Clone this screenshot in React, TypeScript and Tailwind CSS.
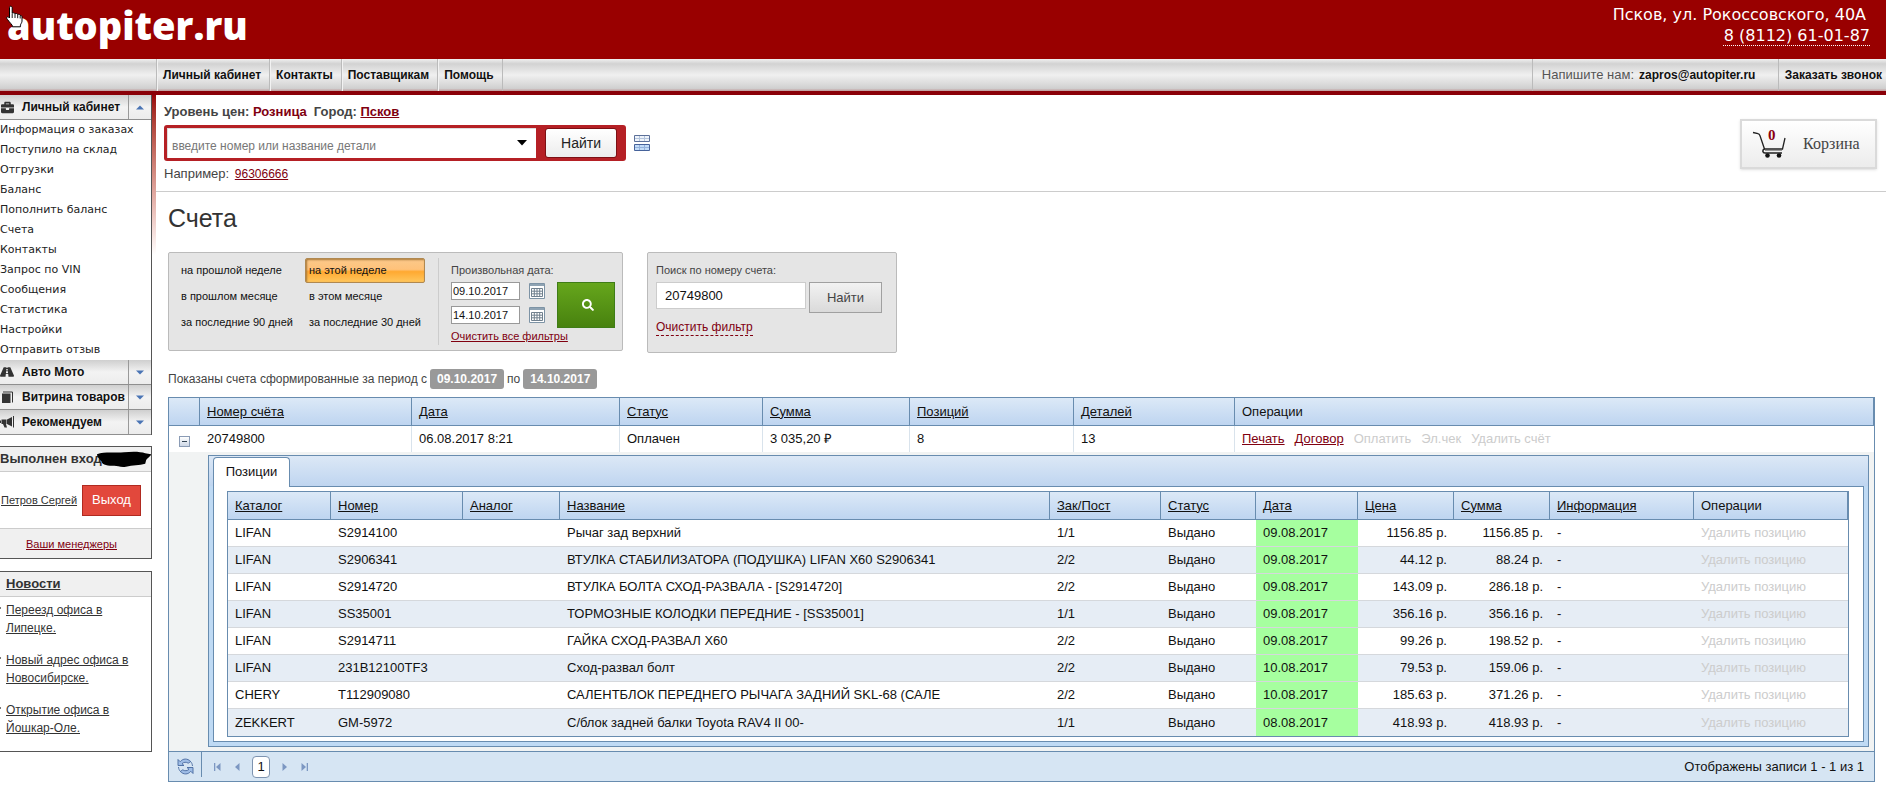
import { FaBriefcase, FaRoad, FaSearch } from "react-icons/fa";

const menuItems = [
  "Информация о заказах",
  "Поступило на склад",
  "Отгрузки",
  "Баланс",
  "Пополнить баланс",
  "Счета",
  "Контакты",
  "Запрос по VIN",
  "Сообщения",
  "Статистика",
  "Настройки",
  "Отправить отзыв",
];

const news = [
  "Переезд офиса в Липецке.",
  "Новый адрес офиса в Новосибирске.",
  "Открытие офиса в Йошкар-Оле.",
];

const navLinks = ["Личный кабинет", "Контакты", "Поставщикам", "Помощь"];

const periods = [
  "на прошлой неделе",
  "на этой неделе",
  "в прошлом месяце",
  "в этом месяце",
  "за последние 90 дней",
  "за последние 30 дней",
];

const positions = [
  { catalog: "LIFAN", number: "S2914100", name: "Рычаг зад верхний", qty: "1/1", date: "09.08.2017", price: "1156.85 р.", sum: "1156.85 р." },
  { catalog: "LIFAN", number: "S2906341", name: "ВТУЛКА СТАБИЛИЗАТОРА (ПОДУШКА) LIFAN X60 S2906341", qty: "2/2", date: "09.08.2017", price: "44.12 р.", sum: "88.24 р." },
  { catalog: "LIFAN", number: "S2914720", name: "ВТУЛКА БОЛТА СХОД-РАЗВАЛА - [S2914720]", qty: "2/2", date: "09.08.2017", price: "143.09 р.", sum: "286.18 р." },
  { catalog: "LIFAN", number: "SS35001", name: "ТОРМОЗНЫЕ КОЛОДКИ ПЕРЕДНИЕ - [SS35001]", qty: "1/1", date: "09.08.2017", price: "356.16 р.", sum: "356.16 р." },
  { catalog: "LIFAN", number: "S2914711", name: "ГАЙКА СХОД-РАЗВАЛ X60", qty: "2/2", date: "09.08.2017", price: "99.26 р.", sum: "198.52 р." },
  { catalog: "LIFAN", number: "231B12100TF3", name: "Сход-развал болт", qty: "2/2", date: "10.08.2017", price: "79.53 р.", sum: "159.06 р." },
  { catalog: "CHERY", number: "T112909080", name: "САЛЕНТБЛОК ПЕРЕДНЕГО РЫЧАГА ЗАДНИЙ SKL-68 (САЛЕ", qty: "2/2", date: "10.08.2017", price: "185.63 р.", sum: "371.26 р." },
  { catalog: "ZEKKERT", number: "GM-5972", name: "С/блок задней балки Toyota RAV4 II 00-", qty: "1/1", date: "08.08.2017", price: "418.93 р.", sum: "418.93 р." },
];

const invoiceColumns = [
  { title: "Номер счёта", width: "w-[212px]" },
  { title: "Дата", width: "w-[208px]" },
  { title: "Статус", width: "w-[143px]" },
  { title: "Сумма", width: "w-[147px]" },
  { title: "Позиций", width: "w-[164px]" },
  { title: "Деталей", width: "w-[161px]" },
];

const positionColumns = [
  { title: "Каталог", width: "w-[103px]" },
  { title: "Номер", width: "w-[132px]" },
  { title: "Аналог", width: "w-[97px]" },
  { title: "Название", width: "w-auto" },
  { title: "Зак/Пост", width: "w-[111px]" },
  { title: "Статус", width: "w-[95px]" },
  { title: "Дата", width: "w-[102px]" },
  { title: "Цена", width: "w-[96px]" },
  { title: "Сумма", width: "w-[96px]" },
  { title: "Информация", width: "w-[144px]" },
];

const headCell = "h-[28px] border-b border-r border-[#688caf] px-[7px] text-left font-normal";
const headRow = "bg-linear-to-b from-[#dce9f7] to-[#bdd4f0]";

function HandCursor() {
  return (
    <svg className="absolute left-[6px] top-[5px] z-10" width="17" height="23" viewBox="0 0 17 23">
      <path
        d="M4.5 1.200c1 0 1.700.7 1.700 1.700v5.300c.4-.6 2.400-.6 2.800.6.6-.6 2.400-.4 2.700.7.8-.5 2.300-.1 2.500 1 .9-.2 1.800.4 1.800 1.400v4.300c0 1.500-1.600 3-1.600 4.300v1.300H6.300v-1.300C5 18.500 1.200 14.600.700 13.300c-.4-1 .8-2 1.800-1.300l1 1V2.900c0-1 .3-1.700 1-1.700z"
        fill="#fff"
        stroke="#000"
        strokeWidth="1"
      />
      <path d="M6.200 8.500v4.500M9 9v4M11.700 9.700v3.500M14.200 11v2.500" stroke="#000" strokeWidth=".9" fill="none" />
    </svg>
  );
}

function BookIcon() {
  return (
    <svg width="13" height="13" viewBox="0 0 13 13">
      <path d="M1 2.500h8.500V12H1z" fill="#333" />
      <path d="M2 1h9.500v10.500" fill="none" stroke="#333" />
    </svg>
  );
}

function MegaphoneIcon() {
  return (
    <svg width="14" height="12" viewBox="0 0 14 12" fill="#333">
      <path d="M12 1v9.500L7 8V3.500zM13 0h1v11.500h-1z" />
      <path d="M6.500 3.500V8H6l1 3.500H4.500L3 8H1.500V3.500z" />
      <path d="M0 4.500h1v2.500H0z" />
    </svg>
  );
}

function Triangle({ up }: { up?: boolean }) {
  return (
    <svg width="8" height="5" viewBox="0 0 8 5">
      <path d={up ? "M0 4.500 4 .5l4 4z" : "M0 .5 4 4.500l4-4z"} fill="#4a74b4" />
    </svg>
  );
}

function CalendarIcon() {
  return (
    <svg width="16" height="16" viewBox="0 0 16 16">
      <path d="M.5.500h15v15H.5z" fill="#fff" stroke="#7d93a5" />
      <path d="M1 1h14v2H1z" fill="#8fa3b3" />
      <path d="M2.500 5.500h11v8h-11zM2.500 8.200h11M2.500 10.800h11M5.300 5.500v8M8 5.500v8M10.700 5.500v8" fill="none" stroke="#70808e" />
    </svg>
  );
}

function CartIcon() {
  return (
    <svg width="34" height="30" viewBox="0 0 34 30">
      <path d="M1 3.500l5 1.200c1 .2 1.600 1 2 2L12.500 20h18L33 9" fill="none" stroke="#222" strokeWidth="1.300" />
      <path d="M12.500 20c-2.500 1-2 4 .5 4h17" fill="none" stroke="#222" strokeWidth="1.500" />
      <path d="M13 21.500h17" stroke="#999" />
      <circle cx="15.500" cy="26.500" r="2.300" fill="#111" />
      <circle cx="27" cy="26.500" r="2.300" fill="#111" />
    </svg>
  );
}

function RowsIcon() {
  return (
    <svg width="16" height="16" viewBox="0 0 16 16">
      <path d="M.5.500h15v6H.5z" fill="#eef3fa" stroke="#5c7099" />
      <path d="M1 3.500h14M5.500 1v5M10.500 1v5" stroke="#b4c5dd" />
      <path d="M.5 9.500h15v6H.5z" fill="#c3dcf8" stroke="#46629a" />
      <path d="M1 12.500h14M5.500 10v5M10.500 10v5" stroke="#94b2dc" />
    </svg>
  );
}

function RefreshIcon() {
  return (
    <svg width="17" height="17" viewBox="0 0 17 17" fill="#9fbde6" stroke="#47699f" strokeWidth=".9" strokeLinejoin="round">
      <path d="M1 1.500v6h6L5 5.700c1.500-1.700 4.500-1.900 6.200-.5l2.500-1.700C10.500.2 6 .2 3.200 3.700z" />
      <path d="M16 15.500v-6h-6l2 1.800c-1.500 1.700-4.500 1.900-6.200.5l-2.500 1.700c3.200 3.300 7.700 3.300 10.500-.2z" />
      <path d="M1.500 9c.2 2 .9 3.500 2 4.500M15.500 8c-.2-2-.9-3.500-2-4.500" fill="none" />
    </svg>
  );
}

function PagerIcon({ kind }: { kind: "first" | "prev" | "next" | "last" }) {
  const flip = kind === "next" || kind === "last";
  const bar = kind === "first" || kind === "last";
  return (
    <svg width="7" height="10" viewBox="0 0 7 10" className={flip ? "-scale-x-100" : ""}>
      {bar && <path d="M0 1h1.300v8H0z" fill="#7c97c2" />}
      <path d="M6.500 1v8L2 5z" fill="#7c97c2" />
    </svg>
  );
}

function SectionHeader({ title, icon, open }: { title: string; icon: React.ReactNode; open?: boolean }) {
  return (
    <div className="flex h-[25px] border-b border-[#8f8f8f] bg-linear-to-b from-[#cfcfcf] via-[#f3f3f3] to-[#ececec]">
      <button className="flex flex-1 items-center gap-2 whitespace-nowrap text-left text-xs font-bold text-[#111]">
        <span className="flex w-3.5 shrink-0 justify-center text-[#333]">{icon}</span>
        {title}
      </button>
      <button aria-label={title} className="flex w-[23px] shrink-0 items-center justify-center border-l border-[#999]">
        <Triangle up={open} />
      </button>
    </div>
  );
}

function Header() {
  return (
    <header>
      <div className="relative flex h-[59px] justify-between bg-[#990000] text-white">
        <HandCursor />
        <a href="#" className="pl-[7px] font-['Open_Sans',sans-serif] text-[38px] font-extrabold leading-[50px]">
          autopiter.ru
        </a>
        <div className="pr-4 pt-1 text-right font-['DejaVu_Sans',sans-serif] text-base leading-[21px]">
          <p className="pr-1">Псков, ул. Рокоссовского, 40А</p>
          <a href="#" className="underline decoration-dotted decoration-1 underline-offset-4">8 (8112) 61-01-87</a>
        </div>
      </div>
      <div className="flex h-[36px] justify-between border-b-4 border-[#8a0008] bg-[linear-gradient(#f0f0f0,#d2d2d2_15%,#f0f0f0_50%,#d0d0d0_92%,#c09a9a)] text-xs font-bold text-[#111]">
        <nav className="ml-[156px] flex border-l border-[#bbb]">
          {navLinks.map((link) => (
            <a key={link} href="#" className="flex items-center border-l border-r border-l-[#f2f2f2] border-r-[#bbb] pl-[5px] pr-2">
              {link}
            </a>
          ))}
        </nav>
        <div className="flex">
          <div className="flex w-[246px] items-center gap-[5px] border-l border-[#bbb] pl-[9px]">
            <span className="text-[13px] font-normal text-[#555]">Напишите нам:</span>
            <a href="#">zapros@autopiter.ru</a>
          </div>
          <a href="#" className="flex items-center border-l border-[#bbb] pl-1.5 pr-1">Заказать звонок</a>
        </div>
      </div>
    </header>
  );
}

function Sidebar() {
  return (
    <aside className="w-[152px] shrink-0">
      <div className="border-r border-[#555]">
        <SectionHeader title="Личный кабинет" icon={<FaBriefcase size={13} />} open />
        <ul className="font-['DejaVu_Sans',sans-serif] text-[11px] leading-5 text-[#222]">
          {menuItems.map((item) => (
            <li key={item}>
              <a href="#" className="whitespace-nowrap">{item}</a>
            </li>
          ))}
        </ul>
        <SectionHeader title="Авто Мото" icon={<FaRoad size={14} />} />
        <SectionHeader title="Витрина товаров" icon={<BookIcon />} />
        <SectionHeader title="Рекомендуем" icon={<MegaphoneIcon />} />
      </div>

      <section className="mt-[11px] border-y border-r border-[#555]">
        <h2 className="relative h-[25px] border-b border-[#ccc] bg-[#f0f0f0] text-[13px] font-bold leading-6 text-[#333]">
          Выполнен вход
          <svg className="absolute right-0 top-1" width="54" height="18" viewBox="0 0 56 18">
            <path d="M0 3c8-3 20-1 28-2s17-1 22 1l6 1c1 1-4 4-5 6l-1 4c-6 2-13 1-20 3-5 1-9-1-12-1-6 0-13-1-13-4-2-3-5-5-5-8z" fill="#000" />
          </svg>
        </h2>
        <div className="flex h-14 items-center justify-between pl-px pr-2.5">
          <a href="#" className="whitespace-nowrap text-[11px] text-[#333] underline">Петров Сергей</a>
          <button className="h-[31px] w-[59px] border border-[#b02a20] bg-[#e2483c] text-[13px] text-white">Выход</button>
        </div>
        <div className="border-t border-[#ccc] bg-[#f0f0f0] pr-2 text-center leading-7">
          <a href="#" className="text-[11px] text-[#800010] underline">Ваши менеджеры</a>
        </div>
      </section>

      <section className="mt-3 border-y border-r border-[#555]">
        <h2 className="border-b border-[#ccc] bg-[#f0f0f0] pl-1.5 text-[13px] font-bold leading-6 text-[#333] underline">Новости</h2>
        <ul className="flex flex-col gap-3.5 pb-3.5 pt-1 text-xs leading-[18px] text-[#333]">
          {news.map((item) => (
            <li key={item} className="flex gap-[5px] pr-5">
              <span className="mt-1.5 h-0.5 w-px shrink-0 bg-[#777]" />
              <a href="#" className="underline">{item}</a>
            </li>
          ))}
        </ul>
      </section>
    </aside>
  );
}

function SearchBar() {
  return (
    <div className="flex items-start justify-between border-b border-[#ccc] pb-2 pl-2 pr-[9px] pt-2">
      <div className="text-[13px] text-[#444]">
        <p className="font-bold leading-[18px]">
          Уровень цен: <span className="text-[#800010]">Розница</span>
          <span className="ml-[7px]">Город:</span>{" "}
          <a href="#" className="text-[#800010] underline">Псков</a>
        </p>
        <form className="mt-1 flex items-center gap-2" onSubmit={(e) => e.preventDefault()}>
          <div className="flex h-9 rounded-[3px] bg-[#b52025] py-[3px] pl-[3px] pr-[9px]">
            <div className="relative">
              <input
                aria-label="введите номер или название детали"
                placeholder="введите номер или название детали"
                className="h-[30px] w-[369px] border-l border-t border-[#ddd] bg-white pl-1 pt-1 text-xs text-[#333] placeholder:text-[#777]"
              />
              <svg className="absolute right-[9px] top-3" width="10" height="6" viewBox="0 0 10 6">
                <path d="M0 0h10L5 5.500z" fill="#000" />
              </svg>
            </div>
            <button className="ml-[9px] h-[30px] w-[72px] rounded-[3px] border border-[#7c1014] bg-linear-to-b from-white to-[#ececec] text-sm text-[#222]">
              Найти
            </button>
          </div>
          <button type="button" aria-label="Список"><RowsIcon /></button>
        </form>
        <p className="mt-1 leading-[18px]">
          Например: <a href="#" className="ml-0.5 text-xs text-[#800010] underline">96306666</a>
        </p>
      </div>
      <a href="#" className="relative mt-4 flex h-[50px] w-[137px] items-center gap-[17px] border-2 border-[#dadada] bg-linear-to-b from-white to-[#ececec] pl-2.5 font-['Liberation_Serif',serif] text-base text-[#444] shadow-sm">
        <CartIcon />
        <span className="absolute left-[26px] top-[5px] text-[15px] font-bold leading-[18px] text-[#8b0010]">0</span>
        Корзина
      </a>
    </div>
  );
}

function Filters() {
  return (
    <div className="flex items-start gap-6 text-[11px]">
      <form className="flex h-[99px] rounded-[2px] border border-[#bbb] bg-[#e5e5e5] p-[5px]" onSubmit={(e) => e.preventDefault()}>
        <div className="grid h-[78px] w-[264px] grid-cols-[131px_120px] text-[#111]">
          {periods.map((period) => (
            <button
              key={period}
              className={
                period === "на этой неделе"
                  ? "h-[25px] rounded-[2px] border border-[#b08850] bg-[linear-gradient(#fbc98a,#ffc27a_45%,#ffa931_55%,#ffc65c)] pl-[3px] text-left shadow-[inset_1px_1px_2px_#a87838]"
                  : "h-[25px] whitespace-nowrap pl-1 text-left odd:pl-[7px]"
              }
            >
              {period}
            </button>
          ))}
        </div>
        <div className="flex flex-col border-l border-[#ccc] pl-3 pr-0.5">
          <span className="pt-1 leading-4 text-[#444]">Произвольная дата:</span>
          <div className="mt-1 flex gap-3">
            <div className="flex flex-col gap-1.5">
              {["09.10.2017", "14.10.2017"].map((date, i) => (
                <div key={date} className="flex items-center gap-[9px]">
                  <input
                    aria-label={i ? "Дата по" : "Дата с"}
                    defaultValue={date}
                    className="h-[18px] w-[69px] border border-[#999] bg-white pl-px text-[11px] text-[#111]"
                  />
                  <button type="button" aria-label="Календарь"><CalendarIcon /></button>
                </div>
              ))}
            </div>
            <button aria-label="Найти" className="flex h-[46px] w-[58px] items-center justify-center border border-[#3f7d17] bg-linear-to-b from-[#66a61c] to-[#48820f] pl-1 text-white">
              <FaSearch size={12} />
            </button>
          </div>
          <a href="#" className="leading-4 text-[#800010] underline">Очистить все фильтры</a>
        </div>
      </form>

      <form className="h-[101px] w-[250px] rounded-[2px] border border-[#bbb] bg-[#e5e5e5] px-2 py-[9px]" onSubmit={(e) => e.preventDefault()}>
        <label htmlFor="invoice" className="block leading-4 text-[#444]">Поиск по номеру счета:</label>
        <div className="mt-1 flex items-start gap-[3px]">
          <input id="invoice" defaultValue="20749800" className="h-[27px] w-[150px] border border-[#ccc] bg-white pl-2 text-[13px] text-[#111]" />
          <button className="h-[31px] w-[73px] border border-[#a0a0a0] bg-linear-to-b from-[#f2f2f2] to-[#dadada] text-[13px] text-[#444]">Найти</button>
        </div>
        <a href="#" className="mt-[7px] inline-block border-b border-dashed border-[#800010] text-xs leading-[15px] text-[#800010]">Очистить фильтр</a>
      </form>
    </div>
  );
}

function PositionsTable() {
  return (
    <table className="w-full table-fixed border-separate border-spacing-0 border border-[#688caf]">
      <thead>
        <tr className={headRow}>
          {positionColumns.map((col) => (
            <th key={col.title} className={`${headCell} ${col.width}`}>
              <a href="#" className="underline">{col.title}</a>
            </th>
          ))}
          <th className={`${headCell} w-[154px]`}>Операции</th>
        </tr>
      </thead>
      <tbody className="[&_td]:h-[27px] [&_td]:border-b [&_td]:border-[#d5d8dc] [&_td]:px-[7px] [&_tr:last-child_td]:border-b-0">
        {positions.map((row) => (
          <tr key={row.number} className="whitespace-nowrap even:bg-[#e6edf5]">
            <td>{row.catalog}</td>
            <td>{row.number}</td>
            <td></td>
            <td>{row.name}</td>
            <td>{row.qty}</td>
            <td>Выдано</td>
            <td className="bg-[#a6ff9f]">{row.date}</td>
            <td className="text-right">{row.price}</td>
            <td className="text-right">{row.sum}</td>
            <td>-</td>
            <td className="text-[#ccc]">Удалить позицию</td>
          </tr>
        ))}
      </tbody>
    </table>
  );
}

function InvoiceGrid() {
  return (
    <div className="border border-[#688caf] text-[13px] leading-4 text-[#111]">
      <table className="w-full table-fixed border-separate border-spacing-0">
        <thead>
          <tr className={headRow}>
            <th className={`${headCell} w-[31px]`}></th>
            {invoiceColumns.map((col) => (
              <th key={col.title} className={`${headCell} ${col.width}`}>
                <a href="#" className="underline">{col.title}</a>
              </th>
            ))}
            <th className={headCell}>Операции</th>
          </tr>
        </thead>
        <tbody>
          <tr className="[&_td]:h-[26px] [&_td]:px-[7px]">
            <td>
              <button aria-label="Свернуть" className="ml-[3px] mt-1 flex size-[11px] items-center justify-center border border-[#8a9bb5] bg-linear-to-b from-white to-[#cdd7e6]">
                <span className="h-px w-[5px] bg-[#345]" />
              </button>
            </td>
            <td className="border-r border-[#d9e3ec]">20749800</td>
            <td className="border-r border-[#d9e3ec]">06.08.2017 8:21</td>
            <td className="border-r border-[#d9e3ec]">Оплачен</td>
            <td className="border-r border-[#d9e3ec]">3 035,20 ₽</td>
            <td className="border-r border-[#d9e3ec]">8</td>
            <td className="border-r border-[#d9e3ec]">13</td>
            <td>
              <div className="flex gap-2.5 whitespace-nowrap text-[#ccc]">
                <a href="#" className="text-[#800010] underline">Печать</a>
                <a href="#" className="text-[#800010] underline">Договор</a>
                <span>Оплатить</span>
                <span>Эл.чек</span>
                <span>Удалить счёт</span>
              </div>
            </td>
          </tr>
          <tr className="bg-[#f1f3f3]">
            <td></td>
            <td colSpan={7} className="pb-1 pl-2 pr-[5px] pt-[3px]">
              <div className="border border-[#688caf] bg-[#bfdaf4] pb-1">
                <div className="flex h-[30px] bg-linear-to-b from-[#dce8f6] to-[#bfd5f0] px-1 pt-px">
                  <button className="relative -mb-px w-[77px] rounded-t-[4px] border border-b-0 border-[#688caf] bg-white pb-px text-center">
                    Позиции
                  </button>
                </div>
                <div className="mx-1 border border-[#688caf] bg-white py-1 pl-[13px] pr-3.5">
                  <PositionsTable />
                </div>
              </div>
            </td>
          </tr>
        </tbody>
      </table>
      <div className="flex h-[30px] items-stretch border-t border-[#688caf] bg-[#d6e5f3] pr-2.5">
        <button aria-label="Обновить" className="mb-1 flex w-[33px] items-center justify-center border-r border-[#688caf] pt-1">
          <RefreshIcon />
        </button>
        <div className="flex items-center gap-3 pl-3">
          <button aria-label="Первая"><PagerIcon kind="first" /></button>
          <button aria-label="Предыдущая"><PagerIcon kind="prev" /></button>
          <a href="#" className="flex h-[22px] w-[18px] items-center justify-center rounded-[4px] border border-[#7d93b0] bg-white">1</a>
          <button aria-label="Следующая"><PagerIcon kind="next" /></button>
          <button aria-label="Последняя"><PagerIcon kind="last" /></button>
        </div>
        <span className="ml-auto self-center">Отображены записи 1 - 1 из 1</span>
      </div>
    </div>
  );
}

export default function App() {
  return (
    <div className="bg-white font-['Liberation_Sans',Arial,sans-serif]">
      <Header />
      <div className="flex items-start">
        <Sidebar />
        <div className="h-40 w-1 shrink-0 bg-linear-to-b from-[#990008] to-white" />
        <main className="min-w-0 flex-1">
          <SearchBar />
          <div className="pl-3 pr-[11px]">
            <h1 className="pb-4 pt-2 text-[25px] leading-9 text-[#333]">Счета</h1>
            <Filters />
            <p className="flex items-center gap-[3px] pb-2 pt-4 text-xs text-[#444]">
              Показаны счета сформированные за период с
              <b className="rounded-[3px] bg-[#999] px-[7px] leading-5 text-white">09.10.2017</b>
              по
              <b className="rounded-[3px] bg-[#999] px-[7px] leading-5 text-white">14.10.2017</b>
            </p>
            <InvoiceGrid />
          </div>
        </main>
      </div>
    </div>
  );
}
